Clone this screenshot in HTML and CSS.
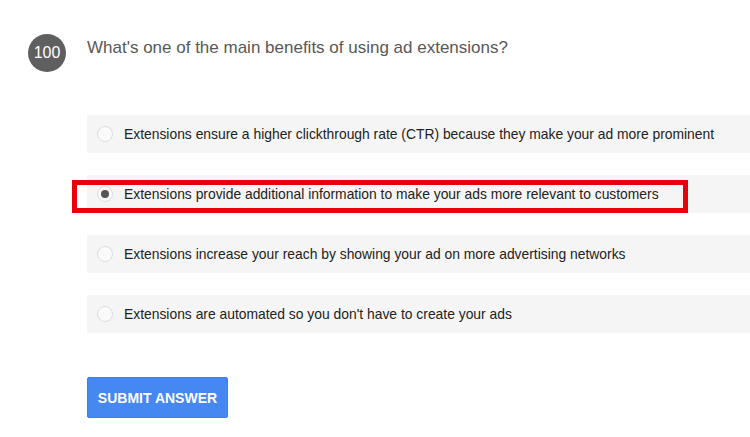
FILE: index.html
```html
<!DOCTYPE html>
<html>
<head>
<meta charset="utf-8">
<link rel="stylesheet" href="styles.css">
</head>
<body>
<div class="quiz">
  <div class="head">
    <div class="num">100</div>
    <div class="question">What's one of the main benefits of using ad extensions?</div>
  </div>
  <div class="options">
    <div class="opt"><span class="radio"></span><span class="label">Extensions ensure a higher clickthrough rate (CTR) because they make your ad more prominent</span></div>
    <div class="opt selected"><span class="radio"></span><span class="label">Extensions provide additional information to make your ads more relevant to customers</span><span class="mark"></span></div>
    <div class="opt"><span class="radio"></span><span class="label">Extensions increase your reach by showing your ad on more advertising networks</span></div>
    <div class="opt"><span class="radio"></span><span class="label">Extensions are automated so you don't have to create your ads</span></div>
  </div>
  <button class="submit">SUBMIT ANSWER</button>
</div>
</body>
</html>
```
FILE: styles.css
```css
html, body {
  margin: 0;
  padding: 0;
  background: #fff;
  overflow: hidden;
}
body {
  font-family: Arial, "Liberation Sans", sans-serif;
}
.quiz {
  padding: 34px 0 0 28px;
}
.head {
  display: flex;
  align-items: flex-start;
  gap: 21px;
}
.num {
  width: 38px;
  height: 38px;
  border-radius: 50%;
  background: #5f5f5f;
  color: #fff;
  font-size: 16px;
  display: flex;
  align-items: center;
  justify-content: center;
  flex: none;
}
.question {
  font-size: 17px;
  color: #585858;
  margin-top: 4px;
  line-height: 20px;
}
.options {
  margin: 43px 0 0 59px;
  display: flex;
  flex-direction: column;
  gap: 22px;
}
.opt {
  position: relative;
  height: 38px;
  background: #f5f5f5;
  display: flex;
  align-items: center;
  padding-left: 10px;
  gap: 11px;
}
.radio {
  width: 14px;
  height: 14px;
  border: 1px solid #dcdcdc;
  border-radius: 50%;
  background: #fafafa;
  flex: none;
  display: flex;
  align-items: center;
  justify-content: center;
}
.selected .radio::after {
  content: "";
  width: 8px;
  height: 8px;
  border-radius: 50%;
  background: #555;
}
.label {
  font-size: 13.86px;
  color: #222;
  white-space: nowrap;
}
.mark {
  position: absolute;
  left: -15px;
  top: 5px;
  width: 606px;
  height: 23px;
  border: 5px solid #e8000b;
}
.submit {
  margin: 44px 0 0 59px;
  width: 141px;
  height: 41px;
  background: #4688f1;
  border: 1px solid #3f7fe6;
  border-radius: 2px;
  color: #fff;
  font-family: Arial, "Liberation Sans", sans-serif;
  font-weight: bold;
  font-size: 14px;
  padding: 0;
}
```
